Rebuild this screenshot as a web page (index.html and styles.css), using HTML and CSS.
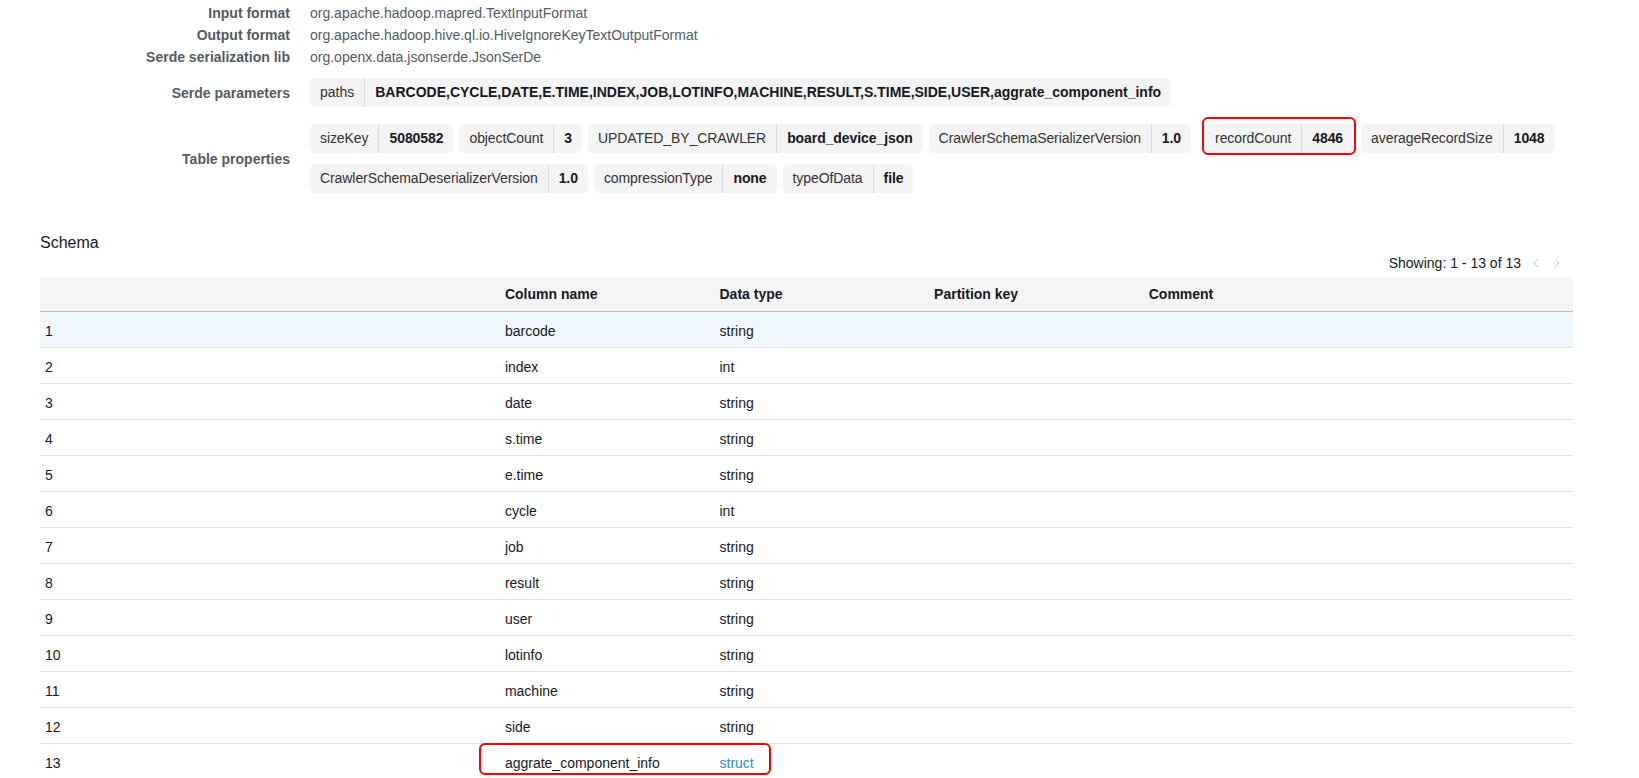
FILE: index.html
```html
<!DOCTYPE html>
<html>
<head>
<meta charset="utf-8">
<link rel="stylesheet" href="styles.css">
</head>
<body>
<div class="props">
  <div class="lbl">Input format</div>
  <div class="val">org.apache.hadoop.mapred.TextInputFormat</div>
  <div class="lbl">Output format</div>
  <div class="val">org.apache.hadoop.hive.ql.io.HiveIgnoreKeyTextOutputFormat</div>
  <div class="lbl">Serde serialization lib</div>
  <div class="val">org.openx.data.jsonserde.JsonSerDe</div>

  <div class="lbl serde">Serde parameters</div>
  <div class="chips serde">
    <div class="chip"><span class="k">paths</span><span class="v">BARCODE,CYCLE,DATE,E.TIME,INDEX,JOB,LOTINFO,MACHINE,RESULT,S.TIME,SIDE,USER,aggrate_component_info</span></div>
  </div>

  <div class="lbl tprops">Table properties</div>
  <div class="chips tprops">
    <div class="chip"><span class="k">sizeKey</span><span class="v">5080582</span></div>
    <div class="chip"><span class="k">objectCount</span><span class="v">3</span></div>
    <div class="chip"><span class="k">UPDATED_BY_CRAWLER</span><span class="v">board_device_json</span></div>
    <div class="chip"><span class="k">CrawlerSchemaSerializerVersion</span><span class="v">1.0</span></div>
    <div class="chip marked"><span class="k">recordCount</span><span class="v">4846</span></div>
    <div class="chip"><span class="k">averageRecordSize</span><span class="v">1048</span></div>
    <div class="chip"><span class="k">CrawlerSchemaDeserializerVersion</span><span class="v">1.0</span></div>
    <div class="chip"><span class="k">compressionType</span><span class="v">none</span></div>
    <div class="chip"><span class="k">typeOfData</span><span class="v">file</span></div>
  </div>
</div>

<div class="schema">
  <div class="title">Schema</div>
  <div class="pager">
    <span>Showing: 1 - 13 of 13</span>
    <svg class="arr first" width="6" height="10" viewBox="0 0 6 10"><path d="M5 1 L1 5 L5 9" fill="none" stroke="#c4c4c4" stroke-width="1"/></svg>
    <svg class="arr" width="6" height="10" viewBox="0 0 6 10"><path d="M1 1 L5 5 L1 9" fill="none" stroke="#c4c4c4" stroke-width="1"/></svg>
  </div>
  <div class="tablewrap">
    <table>
      <colgroup>
        <col class="c1"><col class="c2"><col class="c3"><col class="c4"><col class="c5">
      </colgroup>
      <thead>
        <tr><th></th><th>Column name</th><th>Data type</th><th>Partition key</th><th>Comment</th></tr>
      </thead>
      <tbody>
        <tr class="sel"><td>1</td><td>barcode</td><td>string</td><td></td><td></td></tr>
        <tr><td>2</td><td>index</td><td>int</td><td></td><td></td></tr>
        <tr><td>3</td><td>date</td><td>string</td><td></td><td></td></tr>
        <tr><td>4</td><td>s.time</td><td>string</td><td></td><td></td></tr>
        <tr><td>5</td><td>e.time</td><td>string</td><td></td><td></td></tr>
        <tr><td>6</td><td>cycle</td><td>int</td><td></td><td></td></tr>
        <tr><td>7</td><td>job</td><td>string</td><td></td><td></td></tr>
        <tr><td>8</td><td>result</td><td>string</td><td></td><td></td></tr>
        <tr><td>9</td><td>user</td><td>string</td><td></td><td></td></tr>
        <tr><td>10</td><td>lotinfo</td><td>string</td><td></td><td></td></tr>
        <tr><td>11</td><td>machine</td><td>string</td><td></td><td></td></tr>
        <tr><td>12</td><td>side</td><td>string</td><td></td><td></td></tr>
        <tr><td>13</td><td>aggrate_component_info</td><td><a class="link">struct</a></td><td></td><td></td></tr>
      </tbody>
    </table>
    <div class="mark-row"></div>
  </div>
</div>
</body>
</html>
```
FILE: styles.css
```css
* { box-sizing: border-box; }
html, body { margin: 0; padding: 0; background: #fff; }
body {
  font-family: "Liberation Sans", Arial, sans-serif;
  font-size: 14px;
  color: #16191f;
  width: 1639px;
  height: 778px;
  overflow: hidden;
}

.props {
  display: grid;
  grid-template-columns: 290px 1fr;
  column-gap: 20px;
  padding-top: 2px;
  padding-right: 66px;
  align-items: center;
}
.lbl {
  text-align: right;
  font-weight: bold;
  color: #545b64;
  line-height: 22px;
}
.val {
  color: #545b64;
  line-height: 22px;
}
.serde { margin-top: 10px; }
.tprops { margin-top: 17px; }

.chips {
  display: flex;
  flex-wrap: wrap;
  gap: 11px 6px;
}
.chips.tprops .chip { letter-spacing: -0.08px; }
.chip {
  position: relative;
  display: inline-flex;
  background: #f4f4f4;
  border-radius: 5px;
  line-height: 17px;
}
.chip .k {
  padding: 6px 10px;
  color: #333;
  border-right: 1px solid #dcdcdc;
}
.chip .v {
  padding: 6px 10px;
  font-weight: bold;
  color: #16191f;
}
.chip.marked {
  margin: 0 2px 0 8px;
}
.chip.marked::after {
  content: "";
  position: absolute;
  left: -3px;
  right: -3px;
  top: -7px;
  bottom: -2px;
  border: 2px solid #f00;
  border-radius: 6px;
}

.schema {
  padding: 40px 66px 0 40px;
}
.title {
  font-size: 16px;
  line-height: 20px;
  color: #16191f;
}
.pager {
  display: flex;
  justify-content: flex-end;
  align-items: center;
  line-height: 20px;
  padding-right: 13px;
  color: #16191f;
}
.arr { margin-left: 15px; }
.arr.first { margin-left: 12px; }

.tablewrap {
  position: relative;
  margin-top: 4px;
}
table {
  width: 100%;
  table-layout: fixed;
  border-collapse: separate;
  border-spacing: 0;
}
.c1 { width: 30%; }
.c2, .c3, .c4 { width: 14%; }
.c5 { width: 28%; }
th {
  background: #f5f5f5;
  text-align: left;
  font-weight: bold;
  color: #16191f;
  line-height: 17px;
  padding: 9px 5px 8px;
  border-bottom: 1px solid #bdbdbd;
}
td {
  line-height: 17px;
  padding: 11px 5px 7px;
  border-bottom: 1px solid #e3e3e3;
  color: #16191f;
  white-space: nowrap;
}
tr.sel td { background: #f0f7fd; }
.link { color: #2b8fd8; }
.mark-row {
  position: absolute;
  left: 439px;
  top: 466px;
  width: 292px;
  height: 32px;
  border: 2px solid #f00;
  border-radius: 6px;
}
```
